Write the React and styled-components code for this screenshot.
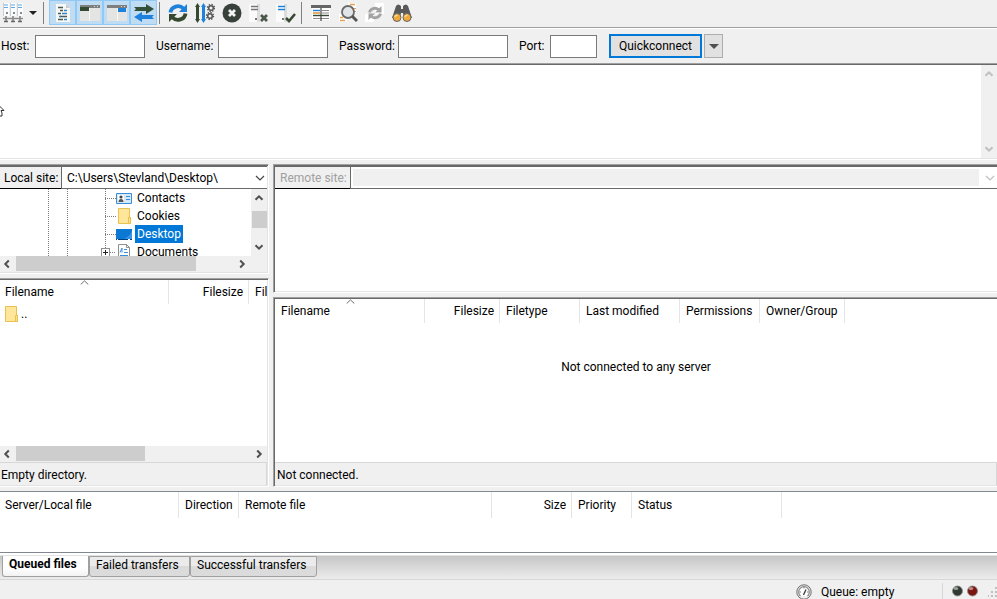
import React from "react";
import styled, { createGlobalStyle, css } from "styled-components";

const GlobalStyle = createGlobalStyle`
  * {
    box-sizing: border-box;
  }
  body {
    margin: 0;
    background: #f0f0f0;
    overflow: hidden;
  }
  body, button, input, select {
    font-family: Roboto, "Noto Sans", sans-serif;
    font-size: 12px;
    line-height: 16px;
    color: #000;
  }
  svg {
    display: block;
    flex: none;
  }
`;

const Window = styled.div`
  display: flex;
  flex-direction: column;
  height: 100vh;
`;

/* toolbar */

const Toolbar = styled.div`
  display: flex;
  align-items: flex-start;
  height: 29px;
  flex: none;
  border-bottom: 1px solid #fff;
  box-shadow: inset 0 -1px #a0a0a0;
`;

const ToolButton = styled.button`
  display: flex;
  align-items: center;
  justify-content: center;
  width: ${(props) => props.$width || 27}px;
  height: 25px;
  padding: 1px 0 0;
  border: 1px solid ${(props) => (props.$on ? "#90c8f6" : "transparent")};
  background: ${(props) => (props.$on ? "#c0dcf3" : "transparent")};
`;

const ToolSeparator = styled.span`
  width: 1px;
  height: 22px;
  margin: 2px ${(props) => props.$after}px 0 ${(props) => props.$before}px;
  background: #808080;
`;

/* quickconnect */

const QuickBar = styled.form`
  display: flex;
  align-items: center;
  height: 34px;
  flex: none;
  padding-left: 1px;
`;

const QuickLabel = styled.label`
  flex: none;
  width: ${(props) => props.$width}px;
  white-space: nowrap;
`;

const QuickInput = styled.input`
  width: ${(props) => props.$width}px;
  height: 23px;
  margin-right: 11px;
  border: 1px solid #7a7a7a;
  background: #fff;
`;

const ConnectButton = styled.button`
  height: 24px;
  width: 93px;
  padding: 0;
  margin: 0 2px 0 1px;
  border: 2px solid #0078d7;
  background: #e1e1e1;
`;

const HistoryButton = styled.button`
  display: flex;
  align-items: center;
  justify-content: center;
  width: 19px;
  height: 24px;
  padding: 0;
  border: 1px solid #adadad;
  background: #e1e1e1;
`;

/* sunken panels */

const sunken = css`
  border-top: 1px solid #a0a0a0;
  border-bottom: 1px solid #fff;
  box-shadow: inset 0 1px #696969, inset 0 -1px #e3e3e3;
  padding: 1px 0;
`;

const Log = styled.section`
  ${sunken}
  position: relative;
  display: flex;
  justify-content: flex-end;
  height: 97px;
  flex: none;
  background: #fff;
`;

const Pointer = styled.svg`
  position: absolute;
  left: 0;
  top: 41px;
`;

const Sites = styled.main`
  display: flex;
  flex: 1;
  min-height: 0;
  gap: 4px;
  padding: 4px 0;
`;

const Side = styled.section`
  display: flex;
  flex-direction: column;
  gap: ${(props) => props.$gap}px;
  flex: ${(props) => props.$flex};
  min-width: 0;
`;

const Pane = styled.div`
  ${sunken}
  display: flex;
  flex-direction: column;
  flex: ${(props) => props.$flex || "none"};
  min-height: 0;
  background: #fff;
  ${(props) =>
    props.$edge === "left"
      ? "border-left: 1px solid #a0a0a0; box-shadow: inset 1px 1px #696969, inset 0 -1px #e3e3e3; padding-left: 1px;"
      : "border-right: 1px solid #fff; box-shadow: inset 0 1px #696969, inset -1px -1px #e3e3e3; padding-right: 1px;"}
`;

const PathBar = styled.div`
  display: flex;
  height: 23px;
  flex: none;
  border-top: 1px solid #696969;
`;

const PathLabel = styled.label`
  display: flex;
  align-items: center;
  flex: none;
  width: ${(props) => props.$width}px;
  padding-left: ${(props) => props.$pad}px;
  background: #f0f0f0;
  border-bottom: 1px solid #000;
  color: ${(props) => (props.$muted ? "#a0a0a0" : "#000")};
`;

const PathCombo = styled.div`
  display: flex;
  align-items: center;
  flex: 1;
  min-width: 0;
  padding: 2px 2px 2px ${(props) => (props.$muted ? 2 : 0)}px;
  border-left: 1px solid #696969;
  border-bottom: 1px solid #696969;
  background: #fff;
  gap: 6px;

  select {
    appearance: none;
    flex: 1;
    min-width: 0;
    height: 100%;
    padding: 0 5px;
    border: 0;
    opacity: 1;
    background: ${(props) => (props.$muted ? "#f0f0f0" : "#fff")};
  }
`;

/* scroll bars */

const VTrack = styled.div`
  display: flex;
  flex-direction: column;
  align-items: center;
  justify-content: space-between;
  width: 16px;
  flex: none;
  padding: 4px 0;
  background: #f0f0f0;
`;

const VRail = styled.span`
  flex: 1;
  padding-top: 8px;
`;

const VThumb = styled.span`
  display: block;
  width: 15px;
  height: 17px;
  background: #cdcdcd;
`;

const HTrack = styled.div`
  display: flex;
  align-items: center;
  height: 16px;
  flex: none;
  padding: 0 ${(props) => props.$end}px 1px 2px;
  background: #f0f0f0;
`;

const HRail = styled.span`
  display: flex;
  flex: 1;
  align-self: stretch;
  margin: 0 4px;
`;

const HThumb = styled.span`
  width: ${(props) => props.$size}%;
  background: #cdcdcd;
`;

/* folder tree */

const TreeArea = styled.div`
  display: flex;
  height: 67px;
  overflow: hidden;
`;

const Tree = styled.ul`
  flex: 1;
  min-width: 0;
  margin: 0;
  padding: 0 0 0 48px;
  list-style: none;
  overflow: hidden;
`;

const TreeRow = styled.li`
  display: flex;
  align-items: center;
  height: 18px;
`;

const Guide = styled.span`
  width: ${(props) => props.$width}px;
  height: 18px;
  background: repeating-linear-gradient(#808080 0 1px, transparent 1px 2px) left / 1px 100% no-repeat;
`;

const Branch = styled(Guide)`
  display: flex;
  align-items: center;

  &::after {
    content: "";
    flex: 1;
    height: 1px;
    background: repeating-linear-gradient(90deg, #808080 0 1px, transparent 1px 2px);
  }
`;

const Expander = styled.button`
  display: flex;
  width: 9px;
  height: 9px;
  padding: 0;
  margin-left: -4px;
  border: 1px solid #919191;
  background: #fff;
`;

const TreeName = styled.span`
  height: 18px;
  padding: 0 2px;
  margin-left: 3px;
  line-height: 18px;
  color: ${(props) => (props.$selected ? "#fff" : "#000")};
  background: ${(props) => (props.$selected ? "#0078d7" : "none")};
`;

/* lists */

const ListArea = styled.div`
  flex: 1;
  min-height: 0;
  overflow: hidden;
`;

const List = styled.table`
  table-layout: fixed;
  width: 0;
  border-collapse: separate;
  border-spacing: 0;

  th {
    position: relative;
    height: ${(props) => props.$head || 24}px;
    padding: 0 5px 0 6px;
    border-right: 1px solid #e5e5e5;
    font-weight: normal;
    white-space: nowrap;
    text-align: left;
  }
  th:first-child {
    padding-left: ${(props) => props.$first || 5}px;
  }
  th.num {
    text-align: right;
  }
  td {
    height: 19px;
    padding: 0 5px;
  }
`;

const SortMark = styled.svg`
  position: absolute;
  top: 0;
  left: calc(50% - 4px);
`;

const UpFolder = styled.span`
  display: flex;
  align-items: center;
  gap: 3px;
`;

const EmptyText = styled.p`
  margin: 36px 0 0;
  text-align: center;
`;

const PaneStatus = styled.div`
  height: 23px;
  flex: none;
  padding: 4px 1px 0 ${(props) => props.$pad}px;
  background: #f0f0f0;
  border-top: 1px solid #d7d7d7;
  border-right: 1px solid #d7d7d7;
`;

/* transfer queue */

const Queue = styled.section`
  height: 62px;
  flex: none;
  border: solid #828790;
  border-width: 1px 0;
  background: #fff;
`;

const TabStrip = styled.div`
  display: flex;
  align-items: flex-start;
  height: 27px;
  flex: none;
  padding: 2px 2px 0;
  border-top: 1px solid #fff;
  border-bottom: 1px solid #d7d7d7;
  background: linear-gradient(#fff 0 1px, #c6c6c6 2px, #ececec);
`;

const Tab = styled.button`
  height: 21px;
  width: ${(props) => props.$width}px;
  padding: 0 0 4px 6px;
  border: 1px solid #a0a0a0;
  border-top-width: ${(props) => (props.$active ? 0 : 1)}px;
  border-radius: 0 0 3px 3px;
  white-space: nowrap;
  text-align: left;
  font-weight: ${(props) => (props.$active ? "bold" : "normal")};
  background: ${(props) =>
    props.$active ? "linear-gradient(#fff 60%, #f2f2f2)" : "linear-gradient(#ebebeb 50%, #dbdbdb 50%)"};
`;

const StatusBar = styled.footer`
  display: flex;
  align-items: center;
  justify-content: flex-end;
  height: 19px;
  flex: none;
  padding-top: 4px;
`;

const QueueState = styled.span`
  width: 121px;
  margin-left: 9px;
`;

const Leds = styled.span`
  display: flex;
  gap: 4px;
  height: 18px;
  padding: 2px 0 0 9px;
  border-left: 1px solid #d7d7d7;
`;

/* drawings */

function Icon({ children, size = 20 }) {
  return (
    <svg width={size} height={size} viewBox={`0 0 ${size} ${size}`} fill="none" aria-hidden="true">
      {children}
    </svg>
  );
}

function Chevron({ dir, color = "#505050" }) {
  const turn = { up: 0, right: 90, down: 180, left: 270 }[dir];
  return (
    <svg width="10" height="10" viewBox="0 0 10 10" fill="none" aria-hidden="true">
      <path d="M1.5 6.8 5 3.3l3.5 3.5" stroke={color} strokeWidth="2" transform={`rotate(${turn} 5 5)`} />
    </svg>
  );
}

function ComboArrow({ color }) {
  return (
    <svg width="10" height="10" viewBox="0 0 10 10" fill="none" aria-hidden="true">
      <path d="m1 3 4 4 4-4" stroke={color} strokeWidth="1.2" />
    </svg>
  );
}

function SortArrow() {
  return (
    <SortMark width="9" height="5" viewBox="0 0 9 5" fill="none" aria-hidden="true">
      <path d="m.7 4.5 3.8-3.6 3.8 3.6" stroke="#6d6d6d" />
    </SortMark>
  );
}

function Caret({ color = "#222", size = 8 }) {
  return (
    <svg width={size} height={size / 2} viewBox="0 0 8 4" aria-hidden="true">
      <path d="M0 0h8L4 4z" fill={color} />
    </svg>
  );
}

function SiteManagerIcon() {
  return (
    <Icon>
      {[0, 7, 14].map((x) => (
        <g key={x}>
          <path d={`M${x} 0h6v13h-6z`} fill="#fbfcfd" />
          <path d={`M${x} 0h1v13h-1z`} fill="#c8ced2" />
          <path d={`M${x + 1} 2h4M${x + 1} 4.5h4`} stroke="#5fa8e4" strokeWidth="1.2" />
          <path d={`M${x + 3} 9h2v2h-2z`} fill="#7f8b92" />
          <path d={`M${x + 3} 13v5`} stroke="#777" strokeWidth="1.4" />
        </g>
      ))}
      <path d="M0 15.5h20" stroke="#8a8a8a" strokeWidth="1.4" />
      <path d="M1 18.5h4M8 18.5h4M15 18.5h4" stroke="#666" strokeWidth="1.6" />
    </Icon>
  );
}

function LogIcon() {
  return (
    <Icon>
      <path d="M3 1h10l4 4v14H3z" fill="#f7f7f5" />
      <path d="M13 1v4h4z" fill="#c9cccd" />
      <path d="M5 4.5h5M7 7.5h3M5 10.5h3M7 13.5h7M5 16.5h5" stroke="#4b5b52" strokeWidth="1.3" />
      <path d="M11 7.5h3M9 10.5h5M6 13.5h2M11 16.5h3" stroke="#2e83d0" strokeWidth="1.3" />
    </Icon>
  );
}

function PanelIcon({ right }) {
  return (
    <Icon>
      <path d="M0 2h20v16H0z" fill="#e4e4e2" />
      <path d="M0 2h20v3H0z" fill="#7d807e" />
      <path d="M14 3h1v1h-1zM17 3h1v1h-1z" fill="#d8d8d8" />
      {right ? (
        <>
          <path d="M11 5h8v4h-8z" fill="#1e82dc" />
          <path d="M10 5h1v13h-1z" fill="#f8f8f8" />
        </>
      ) : (
        <>
          <path d="M0 4h9v4H0z" fill="#354830" />
          <path d="M9 5h1v13H9z" fill="#f8f8f8" />
        </>
      )}
    </Icon>
  );
}

function QueueIcon() {
  return (
    <Icon>
      <path d="M0 4h12V1l8 5-8 5V8H0l2-2z" fill="#35503a" />
      <path d="M20 12H8V9l-8 5 8 5v-3h12l-2-2z" fill="#1e82dc" />
    </Icon>
  );
}

function RefreshIcon() {
  return (
    <Icon>
      <path d="M2.5 9.5a7.5 7 0 0 1 13-4" stroke="#1e82dc" strokeWidth="3.8" />
      <path d="M19 1v8h-8z" fill="#1e82dc" />
      <path d="M17.5 10.5a7.5 7 0 0 1-13 4" stroke="#34492f" strokeWidth="3.8" />
      <path d="M1 19v-8h8z" fill="#34492f" />
    </Icon>
  );
}

function Gear({ x, y }) {
  return (
    <g stroke="#555">
      <circle cx={x} cy={y} r="2.3" strokeWidth="1.5" />
      <circle cx={x} cy={y} r="3.5" strokeWidth="1.4" strokeDasharray="1.4 1.35" />
    </g>
  );
}

function ProcessIcon() {
  return (
    <Icon>
      <path d="M1 4h-1L2.5 0 5 4H4v12h1l-2.5 4L0 16h1z" fill="#34492f" />
      <path d="M7 4H6l2.5-4L11 4h-1v12h1l-2.5 4L6 16h1z" fill="#1e82dc" />
      <Gear x={16} y={5} />
      <Gear x={15} y={13} />
    </Icon>
  );
}

function CancelIcon() {
  return (
    <Icon>
      <circle cx="10" cy="10" r="9.5" fill="#39413b" />
      <path d="m7 7 6 6m0-6-6 6" stroke="#f4f4f4" strokeWidth="2.8" />
    </Icon>
  );
}

function ServerIcon({ connected }) {
  return (
    <Icon>
      <path d="M0 1h11v18H0z" fill="#fbfbfb" />
      <path d="M8 1h3v18H8z" fill="#dcdcdc" />
      <path d="M2 3.5h7M2 6.5h7" stroke={connected ? "#1e82dc" : "#777"} strokeWidth="1.4" />
      <path d="M6 15h2v2H6z" fill="#777" />
      {connected ? (
        <path d="m10 15 3 3 6-7" stroke="#34492f" strokeWidth="2.6" />
      ) : (
        <path d="m12 12 6 6m0-6-6 6" stroke="#4a574a" strokeWidth="2.8" />
      )}
    </Icon>
  );
}

function FilterIcon() {
  return (
    <Icon>
      <path d="M1 4h18v13H1z" fill="#fff" />
      <path d="M0 2h20v3H0z" fill="#666" />
      <path d="M2 7.5h7" stroke="#1e82dc" strokeWidth="1.4" />
      <path d="M2 10h7" stroke="#e08a2c" strokeWidth="1.4" />
      <path d="M2 12.5h16" stroke="#34492f" strokeWidth="1.4" />
      <path d="M2 15.5h16M11 7.5h7M11 10h7" stroke="#8b8b8b" />
      <path d="M10 5v13" stroke="#444" strokeWidth="1.2" />
    </Icon>
  );
}

function CompareIcon() {
  return (
    <Icon>
      <path d="M10 0h8v10h-8zM1 11h8v8H1z" fill="#fff" />
      <path d="M12 1.5h5M2 17.5h5M2 14.5h3" stroke="#e9a04e" strokeWidth="1.6" />
      <path d="M15 5.5h3M15 8.5h3" stroke="#e9a04e" />
      <circle cx="10" cy="9" r="6" fill="#dfe5e9" stroke="#6a6a6a" strokeWidth="1.8" />
      <path d="m14 13 5 5" stroke="#555" strokeWidth="3" />
    </Icon>
  );
}

function SyncIcon() {
  return (
    <Icon>
      <path d="M10 0h9v11h-9zM0 11h9v8H0z" fill="#fff" />
      <path d="M4.5 9.5a5.5 5 0 0 1 9-3M15.5 10.5a5.5 5 0 0 1-9 3" stroke="#a2a2a2" strokeWidth="2.8" />
      <path d="M16.5 3v6.5H10zM3.5 17v-6.5H10z" fill="#a2a2a2" />
    </Icon>
  );
}

function SearchIcon() {
  return (
    <Icon>
      <path d="M4 3q2-3 5 0v3h2V3q3-3 5 0l4 12h-8l-1-5H9l-1 5H0z" fill="#595959" />
      <circle cx="5" cy="14.5" r="4" fill="#f2a93b" stroke="#666" />
      <circle cx="15" cy="14.5" r="4" fill="#f2a93b" stroke="#666" />
      <path d="M3 14q.5-2 2.5-2M13 14q.5-2 2.5-2" stroke="#ffdf96" strokeWidth="1.5" />
    </Icon>
  );
}

function FolderIcon({ width = 16 }) {
  return (
    <svg width={width} height="16" viewBox={width === 16 ? "-2 0 16 16" : "0 0 13 16"} aria-hidden="true">
      <path d="M.5.5h11v9h1v6H.5z" fill="#ffe69a" stroke="#e9c14f" />
      <path d="M10.5 9.5h2v6h-2z" fill="#ffe08a" stroke="#e9c14f" />
    </svg>
  );
}

function ContactsIcon() {
  return (
    <Icon size={16}>
      <path d="M.5 3.5h15v10H.5z" fill="#d3e9fa" stroke="#3b8edb" />
      <path d="M2 5h6v7H2z" fill="#fff" />
      <circle cx="5" cy="7" r="1.6" fill="#444" />
      <path d="M2.5 12q0-3 2.5-3t2.5 3z" fill="#555" />
      <path d="M10 6.5h4M10 9.5h4" stroke="#3b8edb" />
    </Icon>
  );
}

function DesktopIcon() {
  return (
    <Icon size={16}>
      <path d="M0 3h16v11H0z" fill="#0b79d4" />
      <path d="M8 13q5-2 8-8v8z" fill="#3594e6" />
      <path d="M0 13h16v1H0z" fill="#043f80" />
      <path d="M1 13h1v1H1zM12 13h2v1h-2z" fill="#fff" />
    </Icon>
  );
}

function DocumentsIcon() {
  return (
    <Icon size={16}>
      <path d="M2.5.5h8l3 3v12h-11z" fill="#fff" stroke="#8f8f8f" />
      <path d="M10.5.5v3h3" stroke="#8f8f8f" />
      <path d="M4 8.5 6 4v4.5M8 5.5h3M8 8.5h4M4 11.5h8M4 13.5h8" stroke="#3b8edb" />
    </Icon>
  );
}

function SpeedIcon() {
  return (
    <Icon size={16}>
      <circle cx="8" cy="8" r="7.2" fill="#eee" stroke="#6c6c6c" />
      <path d="M4.5 12a5.3 5.3 0 1 1 7 0" fill="#fff" stroke="#888" strokeWidth="1.2" />
      <path d="m7.5 11 2.5-5.5" stroke="#444" strokeWidth="1.4" />
      <path d="M8 3v1.5M3.5 8H5M11 8h1.5" stroke="#777" />
    </Icon>
  );
}

function Led({ color, name }) {
  return (
    <svg width="11" height="12" viewBox="0 0 11 12" role="img" aria-label={name}>
      <circle cx="5.5" cy="6" r="5" fill={color} stroke="#8a8a8a" strokeWidth=".8" />
      <ellipse cx="4" cy="3.6" rx="2.4" ry="1.5" fill="#fff" opacity=".5" />
    </svg>
  );
}

function Grip() {
  return (
    <svg width="9" height="12" viewBox="0 0 9 12" aria-hidden="true">
      <path d="M7 1h2v2H7zM7 5h2v2H7zM3 5h2v2H3zM7 9h2v2H7zM3 9h2v2H3zM0 9h1v2H0z" fill="#bfbfbf" />
    </svg>
  );
}

/* data */

const toggles = [
  { name: "Message log", icon: <LogIcon /> },
  { name: "Local tree", icon: <PanelIcon /> },
  { name: "Remote tree", icon: <PanelIcon right /> },
  { name: "Transfer queue", icon: <QueueIcon /> },
];

const actions = [
  { name: "Refresh", icon: <RefreshIcon /> },
  { name: "Process queue", icon: <ProcessIcon /> },
  { name: "Cancel", icon: <CancelIcon /> },
  { name: "Disconnect", icon: <ServerIcon /> },
  { name: "Reconnect", icon: <ServerIcon connected /> },
];

const tools = [
  { name: "Filters", icon: <FilterIcon /> },
  { name: "Compare", icon: <CompareIcon /> },
  { name: "Synchronized browsing", icon: <SyncIcon /> },
  { name: "Search", icon: <SearchIcon /> },
];

const fields = [
  { id: "host", label: "Host:", labelWidth: 34, width: 110 },
  { id: "user", label: "Username:", labelWidth: 62, width: 110 },
  { id: "pass", label: "Password:", labelWidth: 59, width: 110, type: "password" },
  { id: "port", label: "Port:", labelWidth: 31, width: 47 },
];

const folders = [
  { name: "Contacts", icon: <ContactsIcon /> },
  { name: "Cookies", icon: <FolderIcon /> },
  { name: "Desktop", icon: <DesktopIcon />, selected: true },
  { name: "Documents", icon: <DocumentsIcon />, expandable: true },
];

const localColumns = [
  { name: "Filename", width: 169, sorted: true },
  { name: "Filesize", width: 80, num: true },
  { name: "Filetype", width: 80 },
];

const remoteColumns = [
  { name: "Filename", width: 150, sorted: true },
  { name: "Filesize", width: 75, num: true },
  { name: "Filetype", width: 80 },
  { name: "Last modified", width: 100 },
  { name: "Permissions", width: 80 },
  { name: "Owner/Group", width: 85 },
];

const queueColumns = [
  { name: "Server/Local file", width: 179 },
  { name: "Direction", width: 60 },
  { name: "Remote file", width: 253 },
  { name: "Size", width: 80, num: true },
  { name: "Priority", width: 60 },
  { name: "Status", width: 150 },
];

function ToolGroup({ items, on }) {
  return items.map((item) => (
    <ToolButton key={item.name} type="button" aria-label={item.name} $on={on}>
      {item.icon}
    </ToolButton>
  ));
}

function FileList({ columns, children, ...rest }) {
  return (
    <List {...rest}>
      <colgroup>
        {columns.map((column) => (
          <col key={column.name} width={column.width} />
        ))}
      </colgroup>
      <thead>
        <tr>
          {columns.map((column) => (
            <th key={column.name} scope="col" className={column.num ? "num" : undefined}>
              {column.name}
              {column.sorted && <SortArrow />}
            </th>
          ))}
        </tr>
      </thead>
      {children}
    </List>
  );
}

function HScroll({ end, size }) {
  return (
    <HTrack $end={end}>
      <Chevron dir="left" />
      <HRail>
        <HThumb $size={size} />
      </HRail>
      <Chevron dir="right" />
    </HTrack>
  );
}

function App() {
  return (
    <Window>
      <GlobalStyle />
      <Toolbar>
        <ToolButton type="button" aria-label="Site Manager" $width={26}>
          <SiteManagerIcon />
        </ToolButton>
        <ToolButton type="button" aria-label="Saved sites" $width={14}>
          <Caret />
        </ToolButton>
        <ToolSeparator $before={3} $after={5} />
        <ToolGroup items={toggles} on />
        <ToolSeparator $before={2} $after={4} />
        <ToolGroup items={actions} />
        <ToolSeparator $before={2} $after={5} />
        <ToolGroup items={tools} />
      </Toolbar>

      <QuickBar onSubmit={(e) => e.preventDefault()}>
        {fields.map((field) => (
          <React.Fragment key={field.id}>
            <QuickLabel htmlFor={field.id} $width={field.labelWidth}>
              {field.label}
            </QuickLabel>
            <QuickInput id={field.id} type={field.type || "text"} $width={field.width} />
          </React.Fragment>
        ))}
        <ConnectButton type="submit">Quickconnect</ConnectButton>
        <HistoryButton type="button" aria-label="Quickconnect history">
          <Caret color="#505050" size={10} />
        </HistoryButton>
      </QuickBar>

      <Log aria-label="Message log">
        <Pointer width="5" height="12" viewBox="0 0 5 12" fill="#fff" stroke="#333" aria-hidden="true">
          <path d="M-1 .5 4 5.5H1L2 8v3H-1" />
        </Pointer>
        <VTrack>
          <Chevron dir="up" color="#bfbfbf" />
          <Chevron dir="down" color="#bfbfbf" />
        </VTrack>
      </Log>

      <Sites>
        <Side $gap={4} $flex="0 0 269px">
          <Pane>
            <PathBar>
              <PathLabel htmlFor="local" $width={61} $pad={4}>
                Local site:
              </PathLabel>
              <PathCombo>
                <select id="local">
                  <option>C:\Users\Stevland\Desktop\</option>
                </select>
                <ComboArrow color="#444" />
              </PathCombo>
            </PathBar>
            <TreeArea>
              <Tree>
                {folders.map((folder) => (
                  <TreeRow key={folder.name}>
                    <Guide $width={19} />
                    <Guide $width={38} />
                    <Branch $width={11}>
                      {folder.expandable && (
                        <Expander type="button" aria-label="Expand">
                          <svg width="7" height="7" viewBox="0 0 7 7" aria-hidden="true">
                            <path d="M1 3h5v1H1zM3 1h1v5H3z" fill="#222" />
                          </svg>
                        </Expander>
                      )}
                    </Branch>
                    {folder.icon}
                    <TreeName $selected={folder.selected}>{folder.name}</TreeName>
                  </TreeRow>
                ))}
              </Tree>
              <VTrack>
                <Chevron dir="up" />
                <VRail>
                  <VThumb />
                </VRail>
                <Chevron dir="down" />
              </VTrack>
            </TreeArea>
            <HScroll end={20} size={83} />
          </Pane>
          <Pane $flex="1">
            <ListArea>
              <FileList columns={localColumns}>
                <tbody>
                  <tr>
                    <td colSpan={3}>
                      <UpFolder>
                        <FolderIcon width={13} />
                        ..
                      </UpFolder>
                    </td>
                  </tr>
                </tbody>
              </FileList>
            </ListArea>
            <HScroll end={3} size={55} />
            <PaneStatus $pad={1}>Empty directory.</PaneStatus>
          </Pane>
        </Side>

        <Side $gap={4} $flex="1">
          <Pane $edge="left" $flex="0 0 129px">
            <PathBar>
              <PathLabel htmlFor="remote" $width={75} $pad={5} $muted>
                Remote site:
              </PathLabel>
              <PathCombo $muted>
                <select id="remote" disabled />
                <ComboArrow color="#bfbfbf" />
              </PathCombo>
            </PathBar>
          </Pane>
          <Pane $edge="left" $flex="1">
            <ListArea>
              <FileList columns={remoteColumns} $first={6} />
              <EmptyText>Not connected to any server</EmptyText>
            </ListArea>
            <PaneStatus $pad={2}>Not connected.</PaneStatus>
          </Pane>
        </Side>
      </Sites>

      <Queue aria-label="Transfer queue">
        <FileList columns={queueColumns} $head={26} />
      </Queue>

      <TabStrip role="tablist">
        <Tab type="button" role="tab" aria-selected="true" $active $width={87}>
          Queued files
        </Tab>
        <Tab type="button" role="tab" aria-selected="false" $width={101}>
          Failed transfers
        </Tab>
        <Tab type="button" role="tab" aria-selected="false" $width={127}>
          Successful transfers
        </Tab>
      </TabStrip>

      <StatusBar>
        <SpeedIcon />
        <QueueState>Queue: empty</QueueState>
        <Leds>
          <Led color="#2f3a33" name="Receive activity" />
          <Led color="#7a1712" name="Send activity" />
        </Leds>
        <svg width="10" height="1" aria-hidden="true" />
        <Grip />
      </StatusBar>
    </Window>
  );
}

export default App;
